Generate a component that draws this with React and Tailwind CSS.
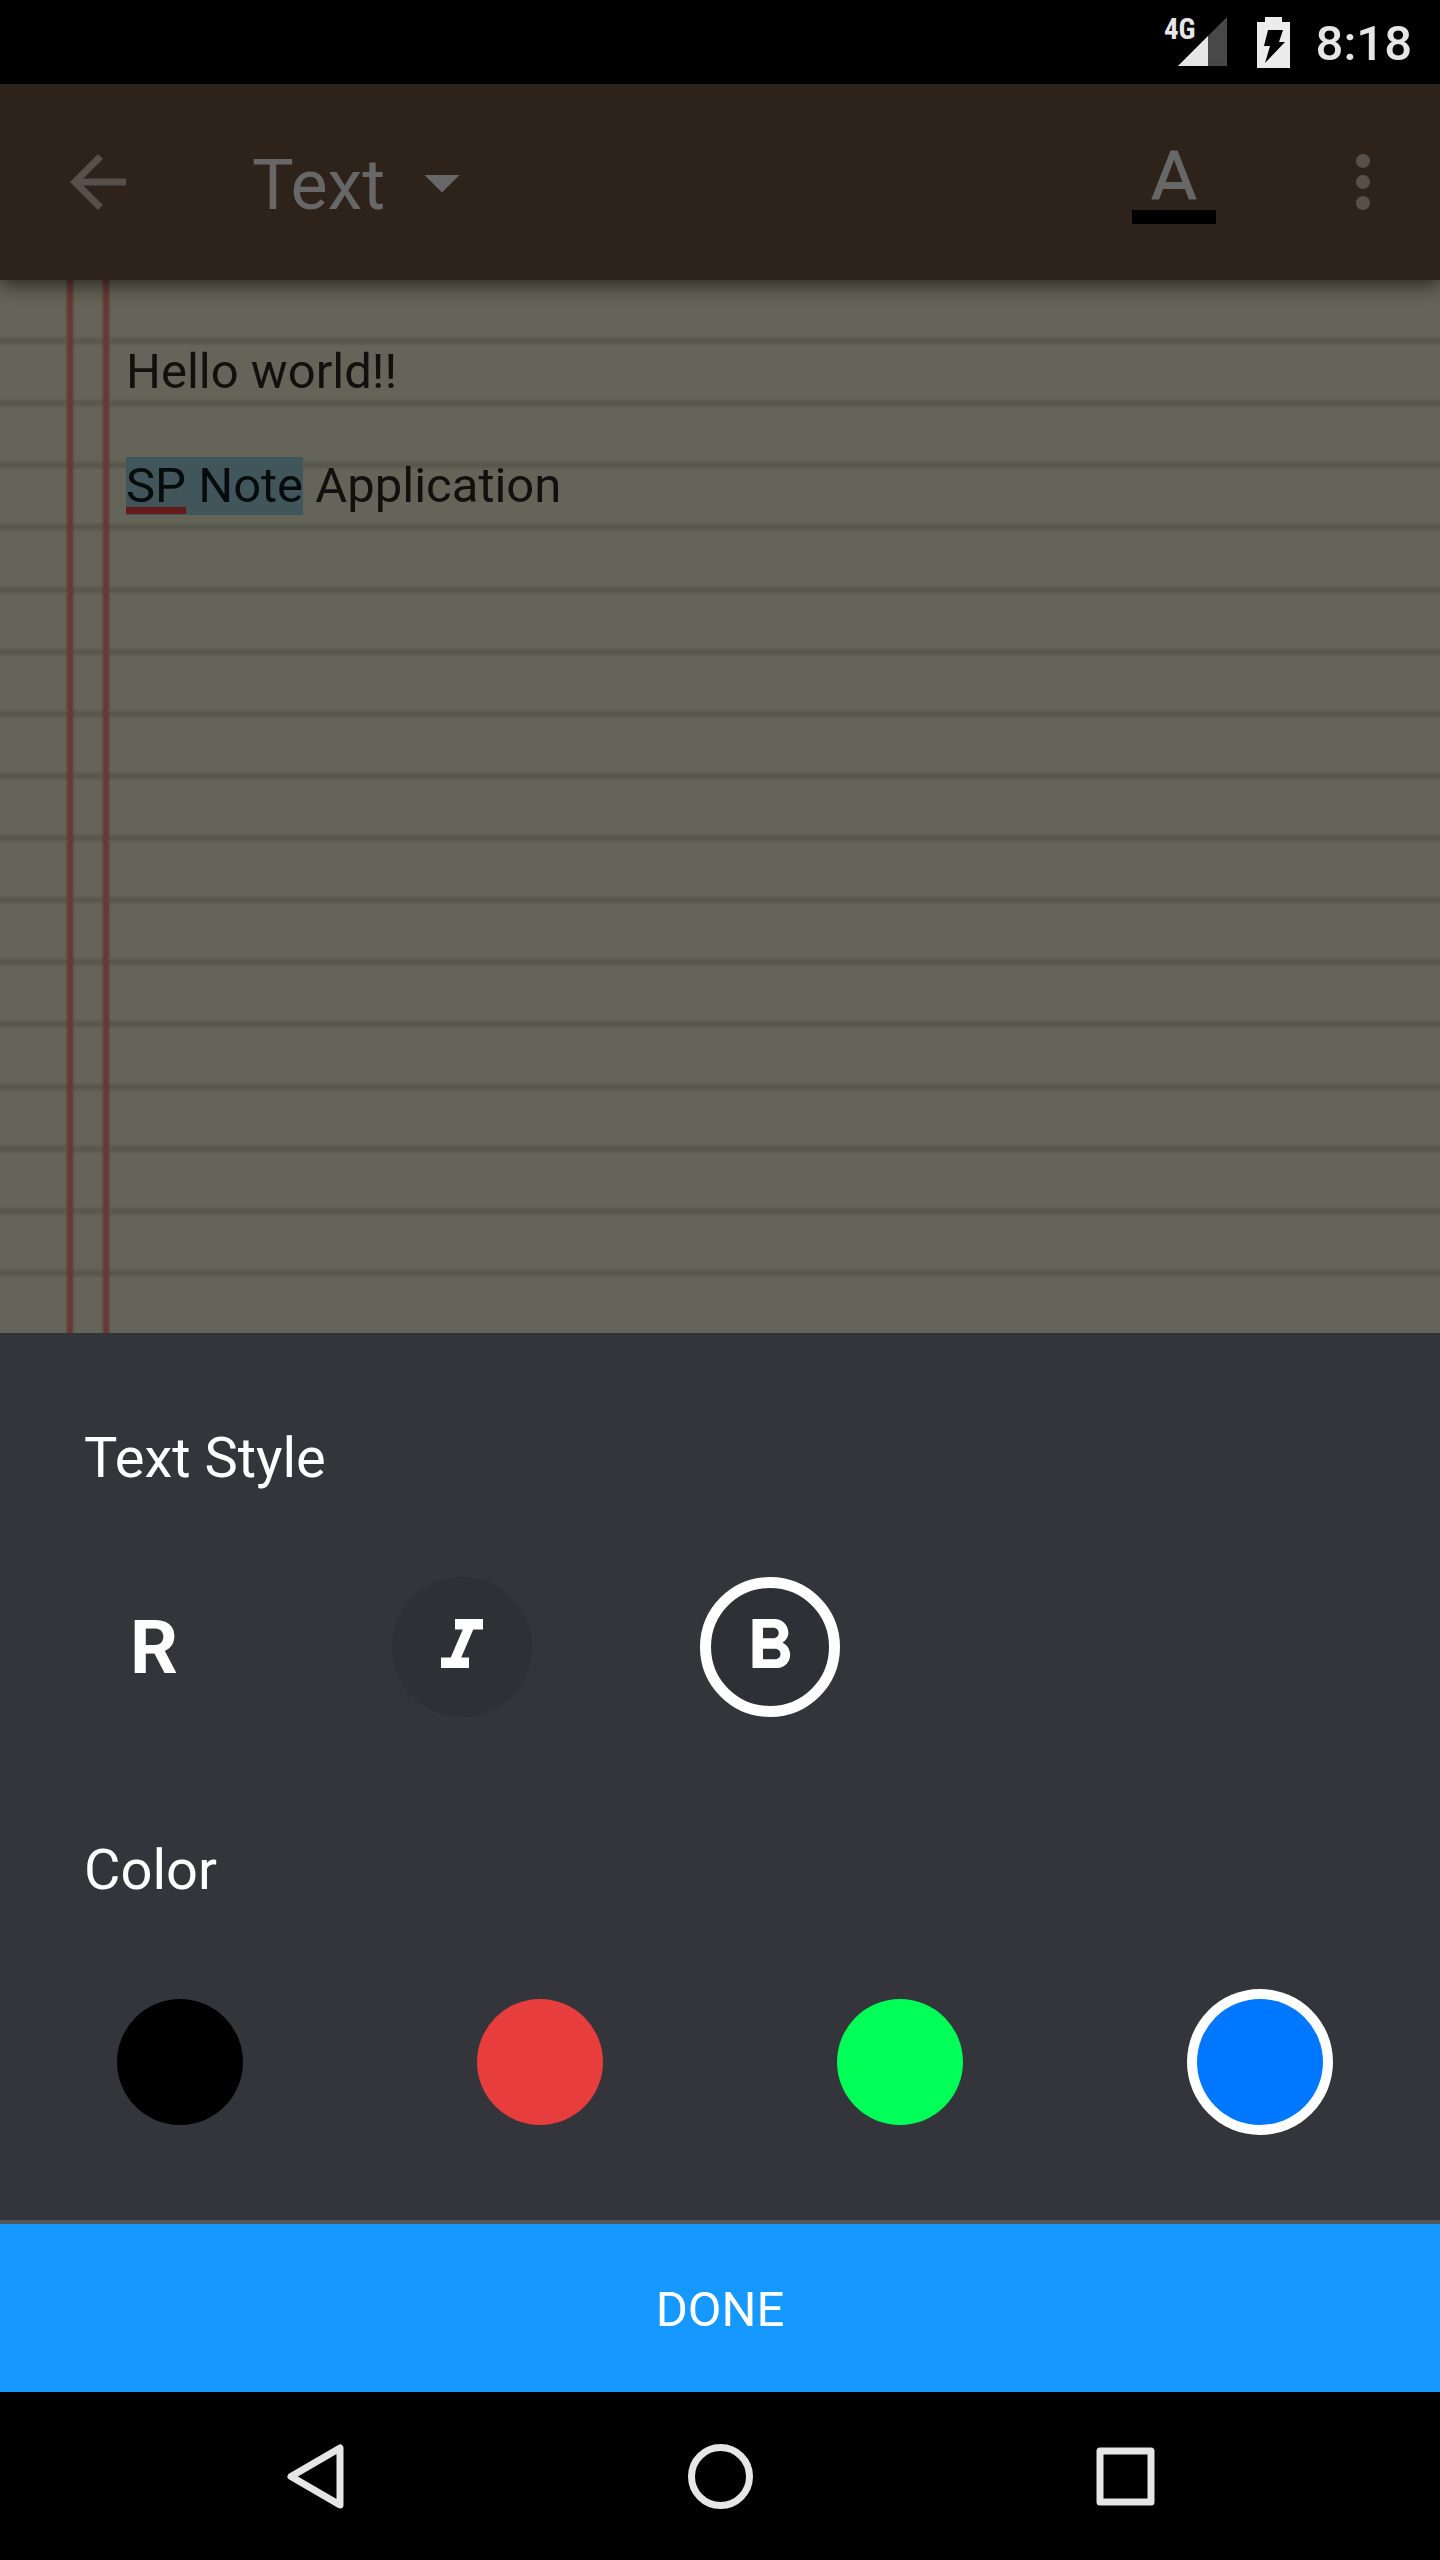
import { useState } from "react";
import { MdArrowBack, MdArrowDropDown, MdFormatBold, MdFormatItalic, MdMoreVert } from "react-icons/md";

const swatches = [
  { name: "Black", className: "bg-black" },
  { name: "Red", className: "bg-[#e83d3d]" },
  { name: "Green", className: "bg-[#00ff57]" },
  { name: "Blue", className: "bg-[#0077ff]" },
];

function StatusBar() {
  return (
    <div className="flex h-21 items-center justify-end bg-black pr-7 text-[#e6e6e6]">
      <div className="flex h-[50px] items-start">
        <span className="font-['Roboto_Condensed','Liberation_Sans_Narrow',Roboto,sans-serif] text-[29px] leading-[24px] font-bold">4G</span>
        <svg className="-ml-[18px] h-[49px] w-[49px]" viewBox="0 0 49 49" aria-hidden="true">
          <path d="M0 49 49 0v49z" fill="#484848" />
          <path d="M0 49 30 19v30z" fill="#e6e6e6" />
        </svg>
      </div>
      <svg className="ml-[30px] h-[51px] w-[33px]" viewBox="0 0 33 51" aria-hidden="true">
        <path d="M8 0h17v5h8v46H0V5h8z" fill="#ececec" />
        <path d="M11 13h15l-4 12h6L8 46l5-17H7z" fill="#000" />
      </svg>
      <span className="ml-[26px] pt-1 text-[49px] leading-[56px] font-medium">8:18</span>
    </div>
  );
}

function Toolbar() {
  return (
    <header className="relative z-10 flex h-49 items-center bg-[#2d231b] px-[35px] text-[#676767] shadow-[0_4px_20px_rgba(0,0,0,0.65)]">
      <button type="button" aria-label="Back" className="ml-[21px] text-[#57504a]">
        <MdArrowBack className="size-21" />
      </button>
      <div className="ml-28 flex items-center">
        <select aria-label="Note type" className="appearance-none bg-transparent pt-1.5 text-[70px] leading-[84px] outline-none">
          <option>Text</option>
        </select>
        <MdArrowDropDown className="pointer-events-none ml-3.5 size-21" aria-hidden="true" />
      </div>
      <button type="button" aria-label="Text color" className="mr-[105px] ml-auto">
        <svg className="size-21" viewBox="0 0 24 24" fill="currentColor" aria-hidden="true">
          <path d="M0 20h24v4H0z" fill="#000" />
          <path d="M11 3 5.5 17h2.25l1.12-3h6.25l1.12 3h2.25L13 3h-2zm-1.38 9L12 5.67 14.38 12H9.62z" />
        </svg>
      </button>
      <button type="button" aria-label="More options" className="text-[#57504a]">
        <MdMoreVert className="size-21" />
      </button>
    </header>
  );
}

function RuledPaper() {
  return (
    <div className="absolute inset-0" aria-hidden="true">
      <div className="flex h-full flex-col justify-between pt-14 pb-[55px]">
        {Array.from({ length: 16 }, (_, i) => (
          <div key={i} className="h-2.5 bg-[linear-gradient(to_bottom,transparent,#58584c_35%,#58584c_65%,transparent)]" />
        ))}
      </div>
      <div className="absolute inset-y-0 left-[65px] flex gap-[26px]">
        <div className="w-2.5 bg-[linear-gradient(to_right,transparent,#663a34_35%,#663a34_65%,transparent)]" />
        <div className="w-2.5 bg-[linear-gradient(to_right,transparent,#663a34_35%,#663a34_65%,transparent)]" />
      </div>
    </div>
  );
}

function Note() {
  return (
    <main className="relative flex-1 bg-[#646458]">
      <RuledPaper />
      <div
        role="textbox"
        aria-label="Note"
        aria-multiline="true"
        contentEditable
        suppressContentEditableWarning
        spellCheck={false}
        className="relative px-[126px] pt-[63px] text-[49px] leading-[57px] text-[#10100e] outline-none"
      >
        <p>Hello world!!</p>
        <p className="mt-[57px]">
          <mark className="bg-[#40565b] pb-px text-[#080b0c]">
            <span className="underline decoration-[#661a1a] decoration-[7px] underline-offset-[5px] [text-decoration-skip-ink:none]">SP</span> Note
          </mark>{" "}
          Application
        </p>
      </div>
    </main>
  );
}

function StyleButton({ label, selected, plain, onClick, children }) {
  return (
    <button
      type="button"
      aria-label={label}
      aria-pressed={selected}
      onClick={onClick}
      className={`flex size-35 items-center justify-center rounded-full ${plain ? "" : "bg-[#2f3035]"} ${selected ? "border-[11px] border-white" : ""}`}
    >
      {children}
    </button>
  );
}

function StylePanel() {
  const [style, setStyle] = useState("bold");
  const [color, setColor] = useState("Blue");
  return (
    <section className="bg-[#34353a] pt-[92px] pb-[85px] text-white">
      <h2 className="px-21 text-[56px] leading-[66px]">Text Style</h2>
      <div className="mt-[86px] flex gap-42 px-21">
        <StyleButton label="Regular" plain selected={style === "regular"} onClick={() => setStyle("regular")}>
          <span className="text-[75px] leading-[84px] font-bold">R</span>
        </StyleButton>
        <StyleButton label="Italic" selected={style === "italic"} onClick={() => setStyle("italic")}>
          <MdFormatItalic className="size-21 shrink-0" />
        </StyleButton>
        <StyleButton label="Bold" selected={style === "bold"} onClick={() => setStyle("bold")}>
          <MdFormatBold className="size-21 shrink-0" />
        </StyleButton>
      </div>
      <h2 className="mt-30 px-21 text-[56px] leading-[66px]">Color</h2>
      <div className="mt-24 grid grid-cols-4 justify-items-center pb-2.5">
        {swatches.map((s) => (
          <input
            key={s.name}
            type="radio"
            name="color"
            aria-label={s.name}
            checked={color === s.name}
            onChange={() => setColor(s.name)}
            className={`size-[126px] appearance-none rounded-full ring-white checked:ring-[10px] ${s.className}`}
          />
        ))}
      </div>
    </section>
  );
}

function NavigationBar() {
  return (
    <nav className="flex h-42 items-center justify-between bg-black px-45 text-[#e6e6e6]">
      <button type="button" aria-label="Back" className="flex w-[270px] justify-center">
        <svg className="size-21" viewBox="0 0 84 84" fill="none" stroke="currentColor" strokeWidth="7" strokeLinejoin="round" aria-hidden="true">
          <path d="M18 42.500 67 14v57z" />
        </svg>
      </button>
      <button type="button" aria-label="Home" className="flex w-[270px] justify-center">
        <svg className="size-21" viewBox="0 0 84 84" fill="none" stroke="currentColor" strokeWidth="7" aria-hidden="true">
          <circle cx="42.500" cy="42.500" r="29" />
        </svg>
      </button>
      <button type="button" aria-label="Recent apps" className="flex w-[270px] justify-center">
        <svg className="size-21" viewBox="0 0 84 84" fill="none" stroke="currentColor" strokeWidth="7" strokeLinejoin="round" aria-hidden="true">
          <path d="M17 17h51v51H17z" />
        </svg>
      </button>
    </nav>
  );
}

export default function App() {
  return (
    <div className="flex min-h-screen flex-col bg-black font-[Roboto,sans-serif]">
      <StatusBar />
      <Toolbar />
      <Note />
      <StylePanel />
      <button type="button" className="h-43 border-t-4 border-[#57575b] bg-[#1598ff] pt-1 text-[49px] leading-[56px] text-white">
        DONE
      </button>
      <NavigationBar />
    </div>
  );
}
